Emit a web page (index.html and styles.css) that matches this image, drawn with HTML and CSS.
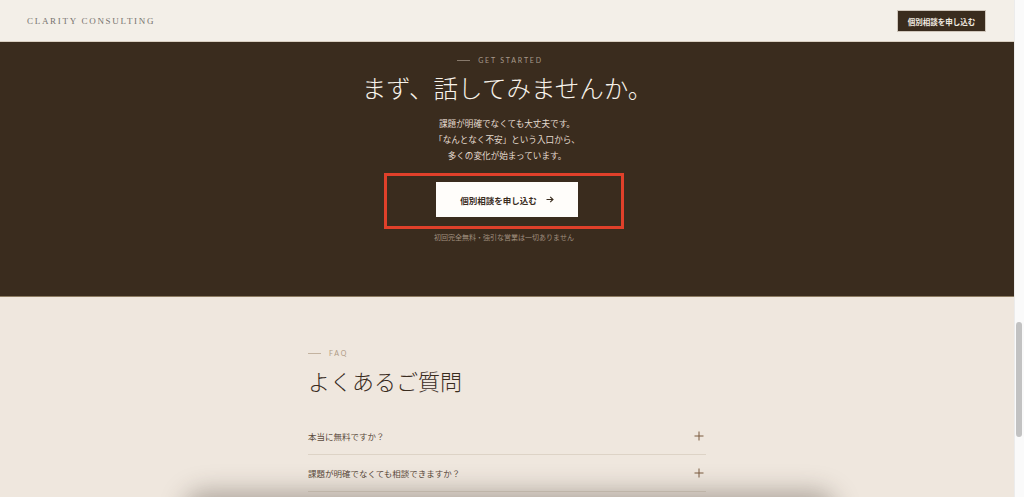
FILE: index.html
```html
<!DOCTYPE html>
<html lang="ja">
<head>
    <meta charset="UTF-8">
    <meta name="viewport" content="width=device-width, initial-scale=1.0">
    <title>Clarity Consulting</title>
    <link rel="stylesheet" href="styles.css">
</head>
<body>
<div class="window">
    <div class="page">
        <header class="header">
            <div class="logo">CLARITY CONSULTING</div>
            <a class="header-btn" href="#">個別相談を申し込む</a>
        </header>

        <section class="cta">
            <div class="eyebrow eyebrow-center"><span class="rule"></span>GET STARTED</div>
            <h2 class="cta-title">まず、話してみませんか。</h2>
            <p class="cta-text">課題が明確でなくても大丈夫です。<br>「なんとなく不安」という入口から、<br>多くの変化が始まっています。</p>
            <div class="highlight">
                <a class="cta-btn" href="#">個別相談を申し込む
                    <svg class="arrow" width="8" height="7" viewBox="0 0 8 7"><path d="M0.5 3.5H7M4.2 0.8L7 3.5L4.2 6.2" stroke="#3a2c1e" stroke-width="1.1" fill="none"/></svg>
                </a>
            </div>
            <p class="cta-note">初回完全無料・強引な営業は一切ありません</p>
        </section>

        <section class="faq">
            <div class="faq-inner">
                <div class="eyebrow eyebrow-faq"><span class="rule"></span>FAQ</div>
                <h2 class="faq-title">よくあるご質問</h2>
                <div class="faq-item">
                    <span>本当に無料ですか？</span>
                    <svg class="plus" width="10" height="10" viewBox="0 0 10 10"><path d="M5 0.5V9.5M0.5 5H9.5" stroke="#7b5b3e" stroke-width="1" fill="none"/></svg>
                </div>
                <div class="faq-item">
                    <span>課題が明確でなくても相談できますか？</span>
                    <svg class="plus" width="10" height="10" viewBox="0 0 10 10"><path d="M5 0.5V9.5M0.5 5H9.5" stroke="#7b5b3e" stroke-width="1" fill="none"/></svg>
                </div>
            </div>
        </section>
        <div class="bottom-shadow"></div>
    </div>
    <div class="scrollbar"><div class="thumb"></div></div>
</div>
</body>
</html>
```

FILE: styles.css
```css
html, body {
    margin: 0;
    height: 100%;
    overflow: hidden;
}

body {
    font-family: "Noto Sans CJK JP", "Noto Sans", sans-serif;
    background-color: #efe7de;
}

.window {
    display: flex;
    height: 497px;
}

.page {
    flex: 1;
    position: relative;
    overflow: hidden;
}

.header {
    height: 42px;
    display: flex;
    align-items: center;
    justify-content: space-between;
    padding: 0 28px 0 27px;
    background-color: #f3efe8;
    box-sizing: border-box;
    border-bottom: 1px solid #d9cfc1;
}

.logo {
    font-family: "Liberation Serif", serif;
    font-size: 9px;
    letter-spacing: 1.7px;
    color: #77736f;
}

.header-btn {
    display: block;
    width: 89px;
    height: 22px;
    line-height: 22px;
    text-align: center;
    background-color: #3a2c1e;
    color: #f2ebe1;
    font-size: 7.5px;
    font-weight: 700;
    text-decoration: none;
    border: 1px solid #cfc6bb;
    box-sizing: border-box;
}

.cta {
    height: 255px;
    background-color: #3a2c1e;
    border-bottom: 1px solid #8d7c62;
    display: flex;
    flex-direction: column;
    align-items: center;
    padding-top: 13px;
    box-sizing: border-box;
}

.eyebrow {
    display: flex;
    align-items: center;
    gap: 8px;
    font-family: "Lato", "Noto Sans", sans-serif;
    font-size: 7px;
    letter-spacing: 1.8px;
    line-height: 10px;
}

.eyebrow-center {
    color: #a89a8b;
    margin-right: 14px;
}

.rule {
    display: block;
    width: 13px;
    height: 1px;
    background-color: currentColor;
    opacity: 0.7;
}

.cta-title {
    margin: 7px 0 0;
    font-size: 24.5px;
    font-weight: 300;
    line-height: 31px;
    color: #f7f2ea;
}

.cta-text {
    margin: 12px 0 0;
    font-size: 8.6px;
    line-height: 16px;
    color: #e4dbcf;
    text-align: center;
}

.highlight {
    margin-top: 10px;
    margin-right: 6px;
    width: 240px;
    height: 56px;
    border: 3px solid #e0402a;
    box-sizing: border-box;
    display: flex;
    justify-content: center;
    padding-top: 6px;
    padding-left: 6px;
}

.cta-btn {
    display: flex;
    align-items: center;
    justify-content: center;
    width: 142px;
    height: 35px;
    background-color: #fffdfa;
    color: #3a2c1e;
    font-size: 8.5px;
    font-weight: 700;
    text-decoration: none;
}

.arrow {
    margin-left: 9px;
}

.cta-note {
    margin: 3px 0 0;
    font-size: 7px;
    line-height: 10px;
    color: #a0907f;
    margin-right: 6px;
}

.faq {
    display: flex;
    justify-content: center;
    padding-top: 51px;
}

.faq-inner {
    width: 398px;
}

.eyebrow-faq {
    color: #b09c86;
}

.faq-title {
    margin: 7px 0 0;
    font-size: 22px;
    font-weight: 300;
    line-height: 30px;
    color: #3a2c1e;
}

.faq-item {
    display: flex;
    justify-content: space-between;
    align-items: center;
    height: 37px;
    border-bottom: 1px solid #ddd3c6;
    font-size: 8.5px;
    color: #5a4a3c;
    box-sizing: border-box;
    padding-right: 2px;
}

.faq-title + .faq-item {
    margin-top: 23px;
}

.bottom-shadow {
    position: absolute;
    left: 190px;
    width: 640px;
    bottom: -30px;
    height: 30px;
    box-shadow: 0 0 24px 6px rgba(60, 50, 40, 0.35);
    border-radius: 20px;
}

.scrollbar {
    width: 10px;
    background-color: #fafafa;
    border-left: 1px solid #ececec;
    box-sizing: border-box;
    position: relative;
}

.thumb {
    position: absolute;
    top: 322px;
    left: 1px;
    width: 6px;
    height: 115px;
    border-radius: 3px;
    background-color: #c2c2c2;
}
```
